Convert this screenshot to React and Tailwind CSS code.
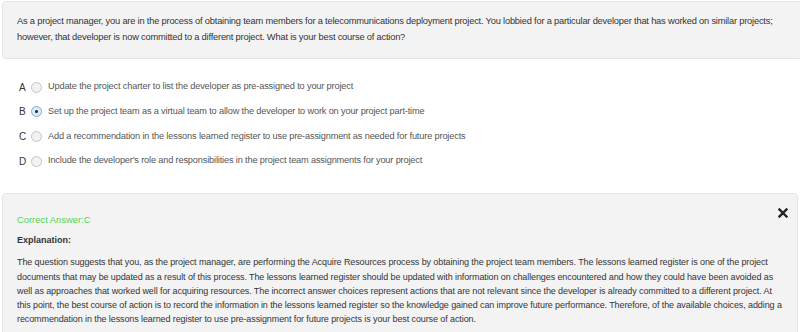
export default function App() {
  const options = [
    { l: "A", t: "Update the project charter to list the developer as pre-assigned to your project" },
    { l: "B", t: "Set up the project team as a virtual team to allow the developer to work on your project part-time", checked: true },
    { l: "C", t: "Add a recommendation in the lessons learned register to use pre-assignment as needed for future projects" },
    { l: "D", t: "Include the developer's role and responsibilities in the project team assignments for your project" },
  ];
  return (
    <div className="w-[800px] h-[332px] overflow-hidden bg-white" style={{ fontFamily: '"Liberation Sans", Arial, sans-serif' }}>
      <div className="ml-[2px] mt-[1px] w-[800px] bg-[#f3f3f3] border border-[#e3e3e3] rounded-[4px] pl-[14px] pt-[11px] pb-[13px] text-[9.3px] tracking-[-0.2px] leading-[16px] text-[#333]">
        <p>As a project manager, you are in the process of obtaining team members for a telecommunications deployment project. You lobbied for a particular developer that has worked on similar projects; however, that developer is now committed to a different project. What is your best course of action?</p>
      </div>
      <div className="mt-[20px] flex flex-col gap-[8.8px] pl-[19px]">
        {options.map((o) => (
          <div key={o.l} className="flex items-center h-[16px]">
            <span className="w-[10px] text-[10px] text-[#333]">{o.l}</span>
            <span className={"w-[11px] h-[11px] rounded-full border flex items-center justify-center ml-[2px] " + (o.checked ? "border-[#7aaee0] bg-[#dbe9f8]" : "border-[#c4c4c4] bg-[#f2f2f2]")}>
              {o.checked && <span className="w-[3px] h-[3px] rounded-full bg-[#222]" />}
            </span>
            <span className="ml-[6px] text-[9.2px] tracking-[-0.15px] text-[#555]">{o.t}</span>
          </div>
        ))}
      </div>
      <div className="ml-[2px] mt-[24px] w-[796px] bg-[#f3f3f3] border border-[#e3e3e3] rounded-[4px] pl-[14px] pr-[14px] pt-[18px] pb-[20px] relative">
        <svg className="absolute right-[9px] top-[14px]" width="10" height="10" viewBox="0 0 10 10">
          <path d="M1.5 1.5 L8.5 8.5 M8.5 1.5 L1.5 8.5" stroke="#222" strokeWidth="2.4" strokeLinecap="square" />
        </svg>
        <p className="text-[9.4px] leading-[16px] text-[#55d455]">Correct Answer:C</p>
        <p className="mt-[4px] text-[9px] leading-[16px] font-bold text-[#333]">Explanation:</p>
        <p className="mt-[7px] text-[9px] tracking-[-0.1px] leading-[14.2px] text-[#333]">The question suggests that you, as the project manager, are performing the Acquire Resources process by obtaining the project team members. The lessons learned register is one of the project documents that may be updated as a result of this process. The lessons learned register should be updated with information on challenges encountered and how they could have been avoided as well as approaches that worked well for acquiring resources. The incorrect answer choices represent actions that are not relevant since the developer is already committed to a different project. At this point, the best course of action is to record the information in the lessons learned register so the knowledge gained can improve future performance. Therefore, of the available choices, adding a recommendation in the lessons learned register to use pre-assignment for future projects is your best course of action.</p>
      </div>
    </div>
  );
}
